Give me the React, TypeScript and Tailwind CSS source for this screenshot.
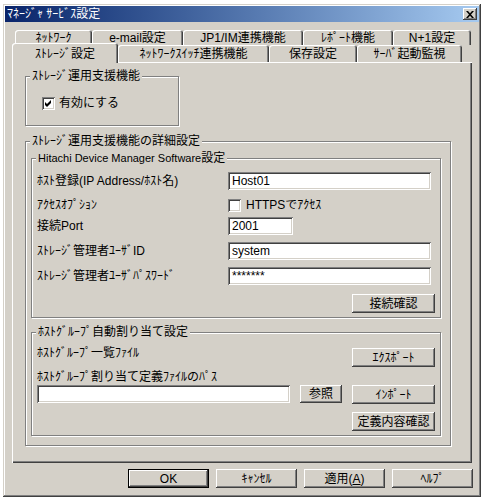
import React from "react";

const raised =
  "bg-[#d4d0c8] shadow-[inset_-1px_-1px_#404040,inset_1px_1px_#fff,inset_-2px_-2px_#808080]";
const sunken =
  "shadow-[inset_1px_1px_#808080,inset_-1px_-1px_#fff,inset_2px_2px_#404040,inset_-2px_-2px_#d4d0c8]";
const tabEdge =
  "bg-[#d4d0c8] rounded-t-[3px] shadow-[inset_1px_1px_#fff,inset_-1px_0_#404040,inset_-2px_0_#808080]";

function Group({
  title,
  className,
  children,
}: {
  title: React.ReactNode;
  className: string;
  children?: React.ReactNode;
}) {
  return (
    <div
      className={`relative border border-[#808080] shadow-[inset_1px_1px_#fff,1px_1px_#fff] ${className}`}
    >
      <span className="absolute left-[4px] top-[-8px] bg-[#d4d0c8] px-[2px] leading-[14px] whitespace-nowrap">
        {title}
      </span>
      {children}
    </div>
  );
}

function Button({
  className,
  children,
  isDefault,
}: {
  className: string;
  children: React.ReactNode;
  isDefault?: boolean;
}) {
  if (isDefault) {
    return (
      <div className={`border border-black ${className}`}>
        <div className={`h-full w-full flex items-center justify-center ${raised}`}>
          {children}
        </div>
      </div>
    );
  }
  return (
    <div className={`flex items-center justify-center ${raised} ${className}`}>
      {children}
    </div>
  );
}

function Checkbox({ checked }: { checked?: boolean }) {
  return (
    <span
      className={`w-[13px] h-[13px] shrink-0 bg-white flex items-center justify-center ${sunken}`}
    >
      {checked && (
        <svg width="7" height="7" viewBox="0 0 7 7">
          <polygon points="0,2 2,4 6,0 6,3 2,7 0,5" fill="#000" />
        </svg>
      )}
    </span>
  );
}

function Field({ className, value }: { className: string; value?: string }) {
  return (
    <div className={`h-[18px] bg-white pl-[4px] flex items-center ${sunken} ${className}`}>
      {value}
    </div>
  );
}

function Row({ label, children, className }: { label: React.ReactNode; children: React.ReactNode; className: string }) {
  return (
    <div className={`flex items-center ${className}`}>
      <div className="w-[191px] shrink-0">{label}</div>
      {children}
    </div>
  );
}

const topTabs = [
  { label: "ﾈｯﾄﾜｰｸ", w: "w-[77px]" },
  { label: "e-mail設定", w: "w-[91px]" },
  { label: "JP1/IM連携機能", w: "w-[120px]" },
  { label: "ﾚﾎﾟｰﾄ機能", w: "w-[90px]" },
  { label: "N+1設定", w: "w-[78px]" },
];

const bottomTabs = [
  { label: "ﾈｯﾄﾜｰｸｽｲｯﾁ連携機能", w: "w-[151px]" },
  { label: "保存設定", w: "w-[88px]" },
  { label: "ｻｰﾊﾞ起動監視", w: "w-[105px]" },
];

export default function App() {
  return (
    <div className="w-[484px] h-[500px] bg-white pl-[3px] pt-[4px] text-[12px] leading-[14px] text-black font-['Liberation_Sans','Noto_Sans_CJK_JP',sans-serif]">
      <div className="w-[478px] h-[493px] p-[2px] bg-[#d4d0c8] shadow-[inset_-1px_-1px_#404040,inset_1px_1px_#d4d0c8,inset_-2px_-2px_#808080,inset_2px_2px_#fff]">
        {/* title bar */}
        <div className="h-[16px] flex items-center justify-between bg-linear-to-r from-[#0a246a] to-[#a6caf0] pl-[2px] pr-[2px]">
          <span className="text-white">ﾏﾈｰｼﾞｬ ｻｰﾋﾞｽ設定</span>
          <div className={`w-[14px] h-[12px] flex items-center justify-center ${raised}`}>
            <svg width="8" height="7" viewBox="0 0 8 7">
              <path d="M0 0h2l2 2.3L6 0h2L5 3.5 8 7H6L4 4.7 2 7H0l3-3.5z" fill="#000" />
            </svg>
          </div>
        </div>

        <div className="pl-[7px] pt-[8px]">
          {/* tabs */}
          <div className="flex ml-[3px] h-[15px]">
            {topTabs.map((t) => (
              <div key={t.label} className={`h-full flex items-center justify-center leading-[12px] ${tabEdge} ${t.w}`}>
                {t.label}
              </div>
            ))}
          </div>
          <div className="flex items-end h-[17px]">
            <div className={`relative z-10 h-[20px] mb-[-1px] w-[106px] flex items-center justify-center pt-[1px] leading-[12px] ${tabEdge}`}>
              ｽﾄﾚｰｼﾞ設定
            </div>
            {bottomTabs.map((t) => (
              <div key={t.label} className={`h-full flex items-center justify-center leading-[12px] ${tabEdge} ${t.w}`}>
                {t.label}
              </div>
            ))}
          </div>

          {/* tab panel */}
          <div className="w-[460px] h-[401px] pl-[13px] pt-[14px] bg-[#d4d0c8] shadow-[inset_1px_1px_#fff,inset_-1px_-1px_#404040,inset_-2px_-2px_#808080]">
            <Group title="ｽﾄﾚｰｼﾞ運用支援機能" className="w-[154px] h-[50px] pl-[16px] pt-[19px]">
              <div className="flex items-center gap-[4px]">
                <Checkbox checked />
                <span>有効にする</span>
              </div>
            </Group>

            <Group title="ｽﾄﾚｰｼﾞ運用支援機能の詳細設定" className="mt-[15px] w-[426px] h-[305px] pl-[5px] pt-[16px]">
              <Group
                title={
                  <>
                    <span className="text-[11px]">Hitachi Device Manager Software</span>設定
                  </>
                }
                className="w-[410px] h-[160px] pl-[5px] pr-[5px] pt-[13px]"
              >
                <Row label="ﾎｽﾄ登録(IP Address/ﾎｽﾄ名)" className="h-[18px]">
                  <Field className="w-[203px]" value="Host01" />
                </Row>
                <Row label="ｱｸｾｽｵﾌﾟｼｮﾝ" className="h-[20px] mt-[5px]">
                  <Checkbox />
                  <span className="ml-[5px]">HTTPSでｱｸｾｽ</span>
                </Row>
                <Row label="接続Port" className="h-[18px] mt-[2px]">
                  <Field className="w-[65px]" value="2001" />
                </Row>
                <Row label="ｽﾄﾚｰｼﾞ管理者ﾕｰｻﾞID" className="h-[18px] mt-[7px]">
                  <Field className="w-[203px]" value="system" />
                </Row>
                <Row label="ｽﾄﾚｰｼﾞ管理者ﾕｰｻﾞﾊﾟｽﾜｰﾄﾞ" className="h-[18px] mt-[7px]">
                  <Field className="w-[203px]" value="*******" />
                </Row>
                <div className="flex justify-end mt-[9px]">
                  <Button className="w-[83px] h-[19px]">接続確認</Button>
                </div>
              </Group>

              <Group title="ﾎｽﾄｸﾞﾙｰﾌﾟ自動割り当て設定" className="mt-[14px] w-[410px] h-[104px] pl-[5px] pr-[5px] pt-[15px]">
                <div className="flex items-start justify-between h-[19px]">
                  <span className="leading-[12px] mt-[-1px]">ﾎｽﾄｸﾞﾙｰﾌﾟ一覧ﾌｧｲﾙ</span>
                  <Button className="w-[83px] h-[19px]">ｴｸｽﾎﾟｰﾄ</Button>
                </div>
                <div className="mt-[4px] leading-[12px]">ﾎｽﾄｸﾞﾙｰﾌﾟ割り当て定義ﾌｧｲﾙのﾊﾟｽ</div>
                <div className="flex items-start mt-[2px]">
                  <Field className="w-[253px]" />
                  <Button className="ml-[10px] w-[42px] h-[18px]">参照</Button>
                  <Button className="ml-[10px] w-[83px] h-[19px]">ｲﾝﾎﾟｰﾄ</Button>
                </div>
                <div className="flex justify-end mt-[8px]">
                  <Button className="w-[83px] h-[19px]">定義内容確認</Button>
                </div>
              </Group>
            </Group>
          </div>

          {/* dialog buttons */}
          <div className="flex gap-[7px] pl-[116px] mt-[6px]">
            <Button isDefault className="w-[81px] h-[19px]">OK</Button>
            <Button className="w-[81px] h-[19px]">ｷｬﾝｾﾙ</Button>
            <Button className="w-[81px] h-[19px]">
              <span>
                適用(<span className="underline">A</span>)
              </span>
            </Button>
            <Button className="w-[81px] h-[19px]">ﾍﾙﾌﾟ</Button>
          </div>
        </div>
      </div>
    </div>
  );
}
